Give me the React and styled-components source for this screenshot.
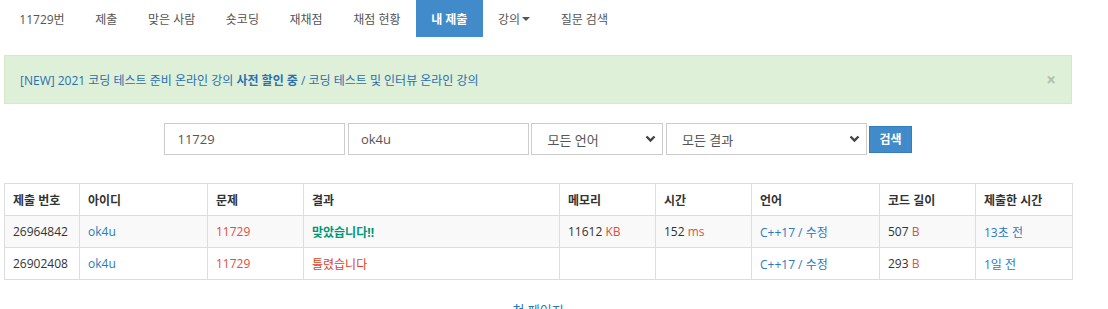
import React from "react";
import styled, { createGlobalStyle } from "styled-components";

const GlobalStyle = createGlobalStyle`
  body {
    margin: 0;
    background: #fff;
    color: #333;
    font-family: "Open Sans", "Noto Sans CJK KR", sans-serif;
    font-size: 12px;
  }
`;

const Page = styled.div`
  width: 1068px;
  margin-left: 4px;
`;

const Nav = styled.ul`
  display: flex;
  list-style: none;
  margin: 0;
  padding: 0;
  height: 37px;
`;

const NavItem = styled.li`
  display: flex;
  align-items: center;
  padding: 0 15.3px;
  font-size: 12px;
  color: ${(p) => (p.active ? "#fff" : "#555")};
  background: ${(p) => (p.active ? "#428bca" : "transparent")};
  font-weight: ${(p) => (p.active ? 700 : 400)};
`;

const Caret = styled.span`
  display: inline-block;
  margin-left: 2px;
  border-top: 4px solid #555;
  border-left: 4px solid transparent;
  border-right: 4px solid transparent;
`;

const Alert = styled.div`
  margin-top: 18px;
  height: 49px;
  box-sizing: border-box;
  display: flex;
  align-items: center;
  justify-content: space-between;
  padding: 0 15px;
  background: #dff0d8;
  border: 1px solid #d6e9c6;
  color: #2a6fb0;
  font-size: 12px;
`;

const Close = styled.span`
  color: #000;
  opacity: 0.2;
  font-size: 17px;
  font-weight: 700;
  line-height: 1;
`;

const Form = styled.div`
  margin-top: 19px;
  display: flex;
  justify-content: center;
  align-items: center;
  gap: 2.5px;
`;

const Input = styled.div`
  width: ${(p) => p.w}px;
  height: 32px;
  box-sizing: border-box;
  border: 1px solid #ccc;
  padding: 0 12px;
  display: flex;
  align-items: center;
  justify-content: space-between;
  color: #555;
  font-size: 13px;
`;

const SelectBox = styled(Input)`
  padding: 0 6px 0 15px;
`;

const Button = styled.div`
  height: 27px;
  box-sizing: border-box;
  padding: 0 9px;
  display: flex;
  align-items: center;
  background: #428bca;
  border: 1px solid #357ebd;
  color: #fff;
  font-weight: 700;
  font-size: 12px;
`;

const Table = styled.table`
  margin-top: 28px;
  width: 1068px;
  border-collapse: collapse;
  table-layout: fixed;
`;

const Th = styled.th`
  border: 1px solid #ddd;
  height: 31px;
  padding: 0 8px;
  text-align: left;
  font-weight: 700;
  color: #333;
`;

const Row = styled.tr`
  background: ${(p) => (p.striped ? "#f9f9f9" : "#fff")};
`;

const Td = styled.td`
  border: 1px solid #ddd;
  height: 31px;
  padding: 0 8px;
  color: #333;
`;

const Link = styled.span`
  color: #2a7ac0;
`;

const Red = styled.span`
  color: #e74c3c;
`;

const Result = styled.span`
  color: ${(p) => (p.ac ? "#009874" : "#dd4124")};
  font-weight: ${(p) => (p.ac ? 700 : 400)};
`;

const Footer = styled.div`
  margin-top: 20px;
  text-align: center;
  color: #2a7ac0;
  font-size: 13px;
`;

const Chevron = () => (
  <svg width="11" height="8" viewBox="0 0 11 8">
    <polyline points="1.5,1.5 5.5,5.5 9.5,1.5" fill="none" stroke="#444" strokeWidth="2.4" />
  </svg>
);

const cols = [75, 128, 96, 256, 96, 96, 128, 96, 97];
const heads = ["제출 번호", "아이디", "문제", "결과", "메모리", "시간", "언어", "코드 길이", "제출한 시간"];

const rows = [
  { id: "26964842", ac: true, result: "맞았습니다!!", mem: "11612", time: "152", len: "507", when: "13초 전" },
  { id: "26902408", ac: false, result: "틀렸습니다", mem: null, time: null, len: "293", when: "1일 전" },
];

export default function App() {
  return (
    <Page>
      <GlobalStyle />
      <Nav>
        <NavItem>11729번</NavItem>
        <NavItem>제출</NavItem>
        <NavItem>맞은 사람</NavItem>
        <NavItem>숏코딩</NavItem>
        <NavItem>재채점</NavItem>
        <NavItem>채점 현황</NavItem>
        <NavItem active>내 제출</NavItem>
        <NavItem>강의<Caret /></NavItem>
        <NavItem>질문 검색</NavItem>
      </Nav>
      <Alert>
        <span>
          [NEW] 2021 코딩 테스트 준비 온라인 강의 <b>사전 할인 중</b> / 코딩 테스트 및 인터뷰 온라인 강의
        </span>
        <Close>×</Close>
      </Alert>
      <Form>
        <Input w={181}>11729</Input>
        <Input w={181}>ok4u</Input>
        <SelectBox w={132}>모든 언어<Chevron /></SelectBox>
        <SelectBox w={201}>모든 결과<Chevron /></SelectBox>
        <Button>검색</Button>
      </Form>
      <Table>
        <colgroup>
          {cols.map((w, i) => (
            <col key={i} style={{ width: w }} />
          ))}
        </colgroup>
        <thead>
          <tr>
            {heads.map((h) => (
              <Th key={h}>{h}</Th>
            ))}
          </tr>
        </thead>
        <tbody>
          {rows.map((r, i) => (
            <Row key={r.id} striped={i % 2 === 0}>
              <Td>{r.id}</Td>
              <Td><Link>ok4u</Link></Td>
              <Td><Red>11729</Red></Td>
              <Td><Result ac={r.ac}>{r.result}</Result></Td>
              <Td>{r.mem && <>{r.mem} <Red>KB</Red></>}</Td>
              <Td>{r.time && <>{r.time} <Red>ms</Red></>}</Td>
              <Td><Link>C++17 / 수정</Link></Td>
              <Td>{r.len} <Red>B</Red></Td>
              <Td><Link>{r.when}</Link></Td>
            </Row>
          ))}
        </tbody>
      </Table>
      <Footer>첫 페이지</Footer>
    </Page>
  );
}
